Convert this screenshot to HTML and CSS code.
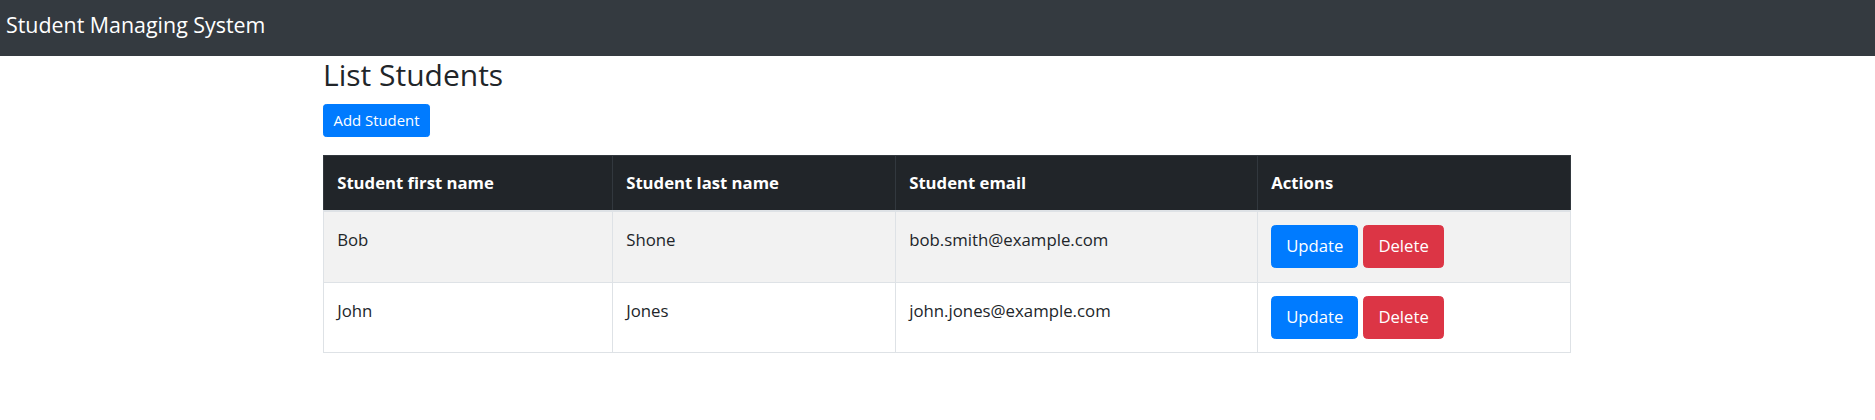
FILE: index.html
```html
<!DOCTYPE html>
<html lang="en">
<head>
<meta charset="utf-8">
<title>Student Managing System</title>
<link rel="stylesheet" href="styles.css">
</head>
<body>
<header class="navbar">
  <span class="brand">Student Managing System</span>
</header>
<main class="container">
  <h2 class="title">List Students</h2>
  <div class="toolbar">
    <button class="btn btn-primary btn-sm">Add Student</button>
  </div>
  <table class="table">
    <colgroup>
      <col class="c1"><col class="c2"><col class="c3"><col class="c4">
    </colgroup>
    <thead>
      <tr>
        <th>Student first name</th>
        <th>Student last name</th>
        <th>Student email</th>
        <th>Actions</th>
      </tr>
    </thead>
    <tbody>
      <tr class="odd">
        <td class="text">Bob</td>
        <td class="text">Shone</td>
        <td class="text">bob.smith@example.com</td>
        <td><div class="actions"><button class="btn btn-primary">Update</button><button class="btn btn-danger">Delete</button></div></td>
      </tr>
      <tr>
        <td class="text">John</td>
        <td class="text">Jones</td>
        <td class="text">john.jones@example.com</td>
        <td><div class="actions"><button class="btn btn-primary">Update</button><button class="btn btn-danger">Delete</button></div></td>
      </tr>
    </tbody>
  </table>
</main>
</body>
</html>
```
FILE: styles.css
```css
html, body {
  margin: 0;
  padding: 0;
  background: #fff;
}
body {
  font-family: "Open Sans", "Noto Sans", sans-serif;
  color: #212529;
  font-size: 16.8px;
  line-height: 26.4px;
}
.navbar {
  background: #343a40;
  height: 56px;
  box-sizing: border-box;
  padding: 9px 0 0 6px;
}
.brand {
  display: block;
  color: #fff;
  font-size: 21.4px;
  line-height: 32px;
}
.container {
  margin-left: 323px;
  width: 1247px;
}
.title {
  margin: 1px 0 0;
  font-size: 30px;
  font-weight: 500;
  line-height: 36px;
}
.toolbar {
  display: flex;
  margin-top: 10.5px;
}
.btn {
  font-family: inherit;
  display: inline-block;
  border: 1px solid transparent;
  color: #fff;
  font-size: 16.7px;
  line-height: 26.4px;
  padding: 7px 14px;
  border-radius: 4.4px;
  margin: 0;
}
.btn-sm {
  font-size: 14.9px;
  line-height: 23.1px;
  padding: 4.4px 9.5px;
  border-radius: 3.3px;
}
.btn-primary {
  background: #007bff;
  border-color: #007bff;
}
.btn-danger {
  background: #dc3545;
  border-color: #dc3545;
}
.table {
  margin-top: 17.5px;
  width: 1247px;
  border-collapse: collapse;
  table-layout: fixed;
  border: 1px solid #dee2e6;
}
.c1 { width: 289px; }
.c2 { width: 283px; }
.c3 { width: 362px; }
.c4 { width: 313px; }
.table th,
.table td {
  padding: 13.6px 13.2px 13.8px;
  text-align: left;
  vertical-align: top;
  border: 1px solid #dee2e6;
}
.table td.text {
  padding-top: 15.2px;
}
.table th {
  padding-top: 13.8px;
  padding-bottom: 13.8px;
  background: #212529;
  color: #fff;
  font-weight: 700;
  font-size: 16.7px;
  border-color: #32383e;
  border-bottom: 2px solid #dee2e6;
}
.table tr.odd td {
  background: #f2f2f2;
}
.actions {
  display: flex;
  gap: 5px;
}
```
